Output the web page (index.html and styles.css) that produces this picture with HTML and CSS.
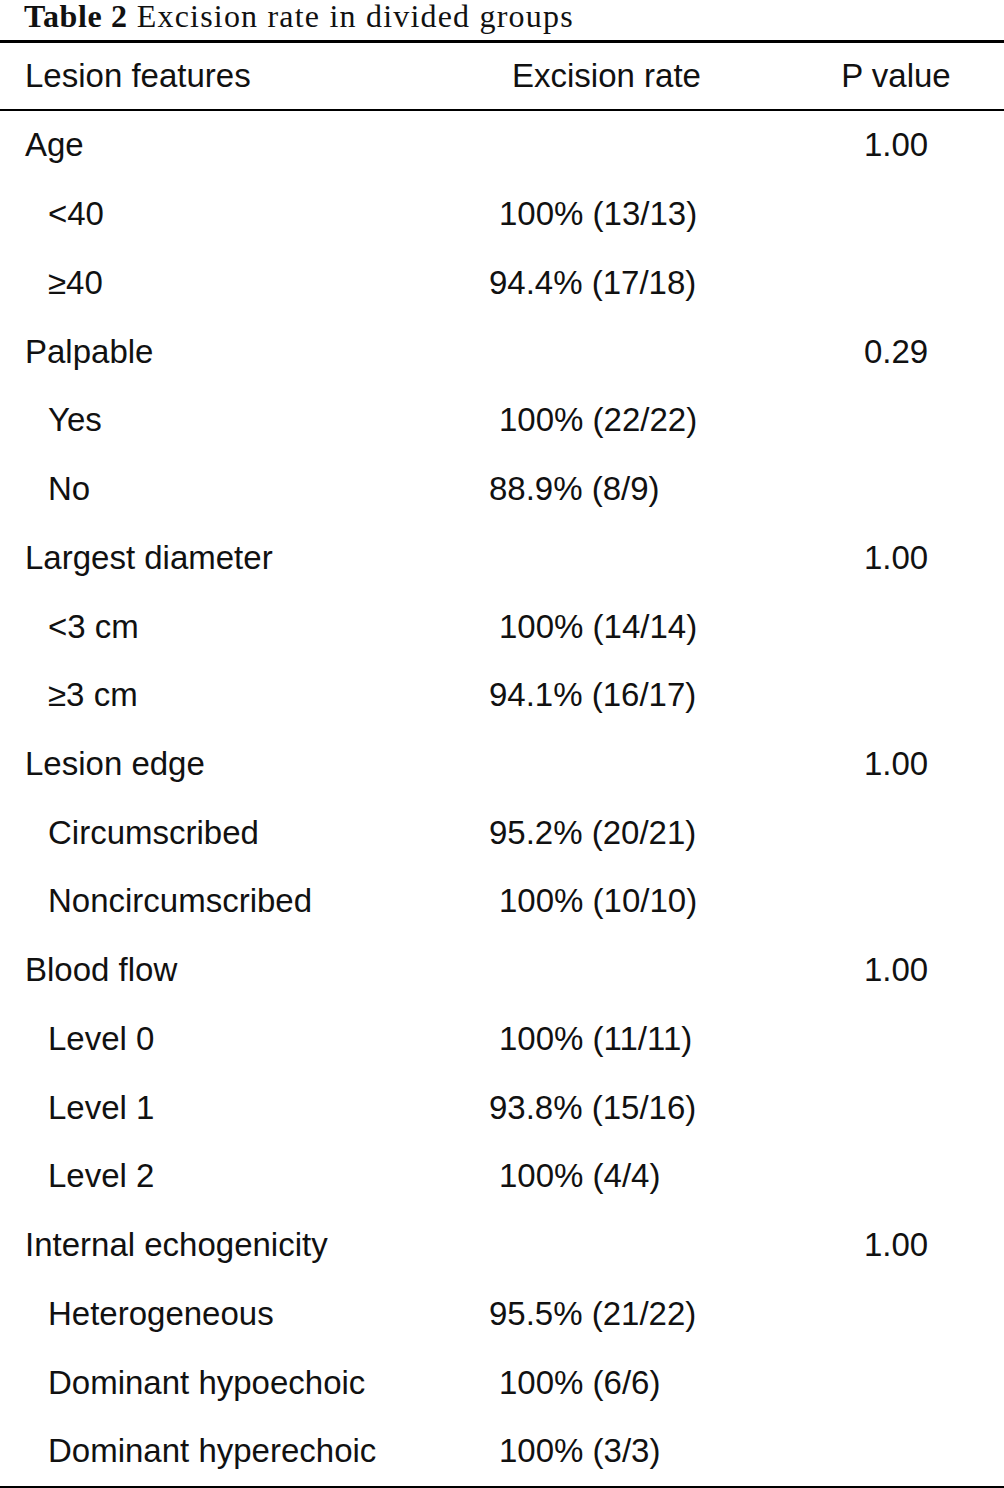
FILE: index.html
```html
<!DOCTYPE html>
<html>
<head>
<meta charset="utf-8">
<link rel="stylesheet" href="styles.css">
</head>
<body>
<div class="caption"><b>Table 2</b> Excision rate in divided groups</div>
<table class="tbl">
<thead>
<tr><th class="c1">Lesion features</th><th class="c2">Excision rate</th><th class="c3">P value</th></tr>
</thead>
<tbody>
<tr><td class="c1">Age</td><td class="c2"></td><td class="c3">1.00</td></tr>
<tr><td class="c1 sub">&lt;40</td><td class="c2 pad">100% (13/13)</td><td class="c3"></td></tr>
<tr><td class="c1 sub">≥40</td><td class="c2">94.4% (17/18)</td><td class="c3"></td></tr>
<tr><td class="c1">Palpable</td><td class="c2"></td><td class="c3">0.29</td></tr>
<tr><td class="c1 sub">Yes</td><td class="c2 pad">100% (22/22)</td><td class="c3"></td></tr>
<tr><td class="c1 sub">No</td><td class="c2">88.9% (8/9)</td><td class="c3"></td></tr>
<tr><td class="c1">Largest diameter</td><td class="c2"></td><td class="c3">1.00</td></tr>
<tr><td class="c1 sub">&lt;3 cm</td><td class="c2 pad">100% (14/14)</td><td class="c3"></td></tr>
<tr><td class="c1 sub">≥3 cm</td><td class="c2">94.1% (16/17)</td><td class="c3"></td></tr>
<tr><td class="c1">Lesion edge</td><td class="c2"></td><td class="c3">1.00</td></tr>
<tr><td class="c1 sub">Circumscribed</td><td class="c2">95.2% (20/21)</td><td class="c3"></td></tr>
<tr><td class="c1 sub">Noncircumscribed</td><td class="c2 pad">100% (10/10)</td><td class="c3"></td></tr>
<tr><td class="c1">Blood flow</td><td class="c2"></td><td class="c3">1.00</td></tr>
<tr><td class="c1 sub">Level 0</td><td class="c2 pad">100% (11/11)</td><td class="c3"></td></tr>
<tr><td class="c1 sub">Level 1</td><td class="c2">93.8% (15/16)</td><td class="c3"></td></tr>
<tr><td class="c1 sub">Level 2</td><td class="c2 pad">100% (4/4)</td><td class="c3"></td></tr>
<tr><td class="c1">Internal echogenicity</td><td class="c2"></td><td class="c3">1.00</td></tr>
<tr><td class="c1 sub">Heterogeneous</td><td class="c2">95.5% (21/22)</td><td class="c3"></td></tr>
<tr><td class="c1 sub">Dominant hypoechoic</td><td class="c2 pad">100% (6/6)</td><td class="c3"></td></tr>
<tr><td class="c1 sub">Dominant hyperechoic</td><td class="c2 pad">100% (3/3)</td><td class="c3"></td></tr>
</tbody>
</table>
</body>
</html>
```
FILE: styles.css
```css
html, body {
  margin: 0;
  padding: 0;
  background: #ffffff;
}
body {
  width: 1004px;
  color: #111111;
}
.caption {
  font-family: "Liberation Serif", "Times New Roman", serif;
  font-size: 32px;
  line-height: 32px;
  letter-spacing: 1.2px;
  padding-left: 24px;
  height: 32px;
  padding-bottom: 8px;
  color: #111;
  white-space: nowrap;
}
.caption b {
  font-weight: bold;
  letter-spacing: 0.6px;
}
.tbl {
  width: 1004px;
  border-collapse: collapse;
  border-top: 3px solid #000;
  border-bottom: 3px solid #000;
  font-family: "Liberation Sans", Arial, sans-serif;
  font-size: 33px;
  table-layout: fixed;
}
.tbl th {
  font-weight: normal;
  height: 66px;
  border-bottom: 2px solid #000;
  padding: 0;
  vertical-align: middle;
}
.tbl td {
  height: 68.74px;
  padding: 0;
  vertical-align: middle;
}
.c1 {
  width: 470px;
  text-align: left;
  padding-left: 25px !important;
  box-sizing: border-box;
}
.c1.sub {
  padding-left: 48px !important;
}
.c2 {
  width: 318px;
  text-align: left;
  padding-left: 19px !important;
  box-sizing: border-box;
}
th.c2 {
  padding-left: 42px !important;
}
.c2.pad {
  padding-left: 29px !important;
}
.c3 {
  width: 216px;
  text-align: center;
}
```
